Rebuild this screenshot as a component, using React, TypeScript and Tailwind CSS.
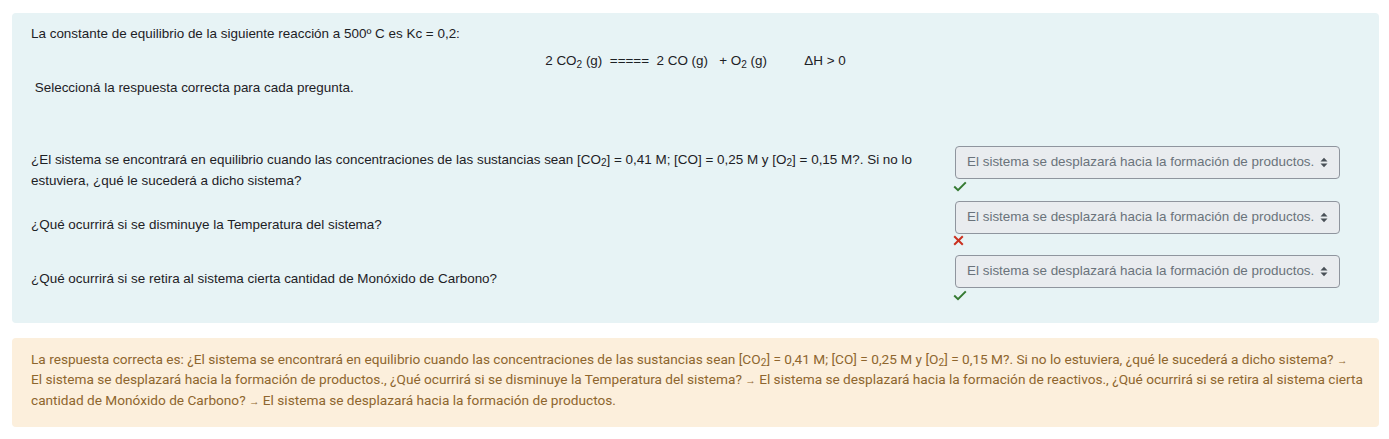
import type { ReactNode } from "react";

type Row = { question: ReactNode; correct: boolean };

const answer = "El sistema se desplazará hacia la formación de productos.";

function Check() {
  return (
    <svg width="14" height="11" viewBox="0 0 14 11" className="block">
      <path d="M1.2 5.6 L5 9.2 L12.8 1.4" fill="none" stroke="#357a32" strokeWidth="2" />
    </svg>
  );
}

function Cross() {
  return (
    <svg width="11" height="11" viewBox="0 0 11 11" className="block">
      <path d="M1.2 1.2 L9.8 9.8 M9.8 1.2 L1.2 9.8" fill="none" stroke="#ca3120" strokeWidth="2" />
    </svg>
  );
}

function Chevrons() {
  return (
    <svg width="8" height="11" viewBox="0 0 8 11" className="block">
      <path d="M0.5 4.5 L4 0.8 L7.5 4.5 Z M0.5 6.5 L4 10.2 L7.5 6.5 Z" fill="#495057" />
    </svg>
  );
}

const rows: Row[] = [
  {
    question: (
      <>
        ¿El sistema se encontrará en equilibrio cuando las concentraciones de las sustancias sean [CO<sub>2</sub>] = 0,41 M; [CO] = 0,25 M y [O<sub>2</sub>] = 0,15 M?. Si no lo
        <br />
        estuviera, ¿qué le sucederá a dicho sistema?
      </>
    ),
    correct: true,
  },
  { question: "¿Qué ocurrirá si se disminuye la Temperatura del sistema?", correct: false },
  { question: "¿Qué ocurrirá si se retira al sistema cierta cantidad de Monóxido de Carbono?", correct: true },
];

const arrow = <span className="text-[10.5px] leading-[0]">→</span>;

export default function App() {
  return (
    <div className="min-h-[439px] bg-white pt-[13px] font-['Liberation_Sans',Arial,sans-serif] text-[13.45px] text-[#1d2125]">
      <div className="ml-[12px] w-[1367px] rounded-[4px] bg-[#e7f3f5] pb-[20.5px] pl-[19px] pt-[11px]">
        <p className="mb-[7px] leading-[20px]">La constante de equilibrio de la siguiente reacción a 500º C es Kc = 0,2:</p>
        <p className="mb-[7px] whitespace-pre pr-[19px] text-center leading-[20px]">
          2 CO<sub>2</sub> (g)  =====  2 CO (g)   + O<sub>2</sub> (g)          ΔH &gt; 0
        </p>
        <p className="whitespace-pre leading-[20px]"> Seleccioná la respuesta correcta para cada pregunta.</p>
        <div className="mt-[48px] grid grid-cols-[904px_387px] gap-x-[18px] gap-y-[7px]">
          {rows.map((row, i) => (
            <div key={i} className="contents">
              <div className="flex h-[47.5px] items-center leading-[21px]">
                <div className="whitespace-nowrap">{row.question}</div>
              </div>
              <div className="flex h-[47.5px] flex-col">
                <div className="ml-[2px] flex h-[33px] w-[385px] items-center justify-between rounded-[4px] border border-[#8f959e] bg-[#e9ecef] pl-[11px] pr-[11px] text-[#6a737b]">
                  <span>{answer}</span>
                  <Chevrons />
                </div>
                <div className="flex h-[14.5px] items-center">{row.correct ? <Check /> : <Cross />}</div>
              </div>
            </div>
          ))}
        </div>
      </div>
      <div className="ml-[12px] mt-[15px] w-[1367px] whitespace-nowrap rounded-[4px] bg-[#fcefdc] pb-[16.75px] pl-[19px] pt-[10.75px] font-['Roboto',sans-serif] text-[13.65px] leading-[20.5px] text-[#8e662e]">
        La respuesta correcta es: ¿El sistema se encontrará en equilibrio cuando las concentraciones de las sustancias sean [CO<sub>2</sub>] = 0,41 M; [CO] = 0,25 M y [O<sub>2</sub>] = 0,15 M?. Si no lo estuviera, ¿qué le sucederá a dicho sistema? {arrow}
        <br />
        El sistema se desplazará hacia la formación de productos., ¿Qué ocurrirá si se disminuye la Temperatura del sistema? {arrow} El sistema se desplazará hacia la formación de reactivos., ¿Qué ocurrirá si se retira al sistema cierta
        <br />
        cantidad de Monóxido de Carbono? {arrow} El sistema se desplazará hacia la formación de productos.
      </div>
    </div>
  );
}
